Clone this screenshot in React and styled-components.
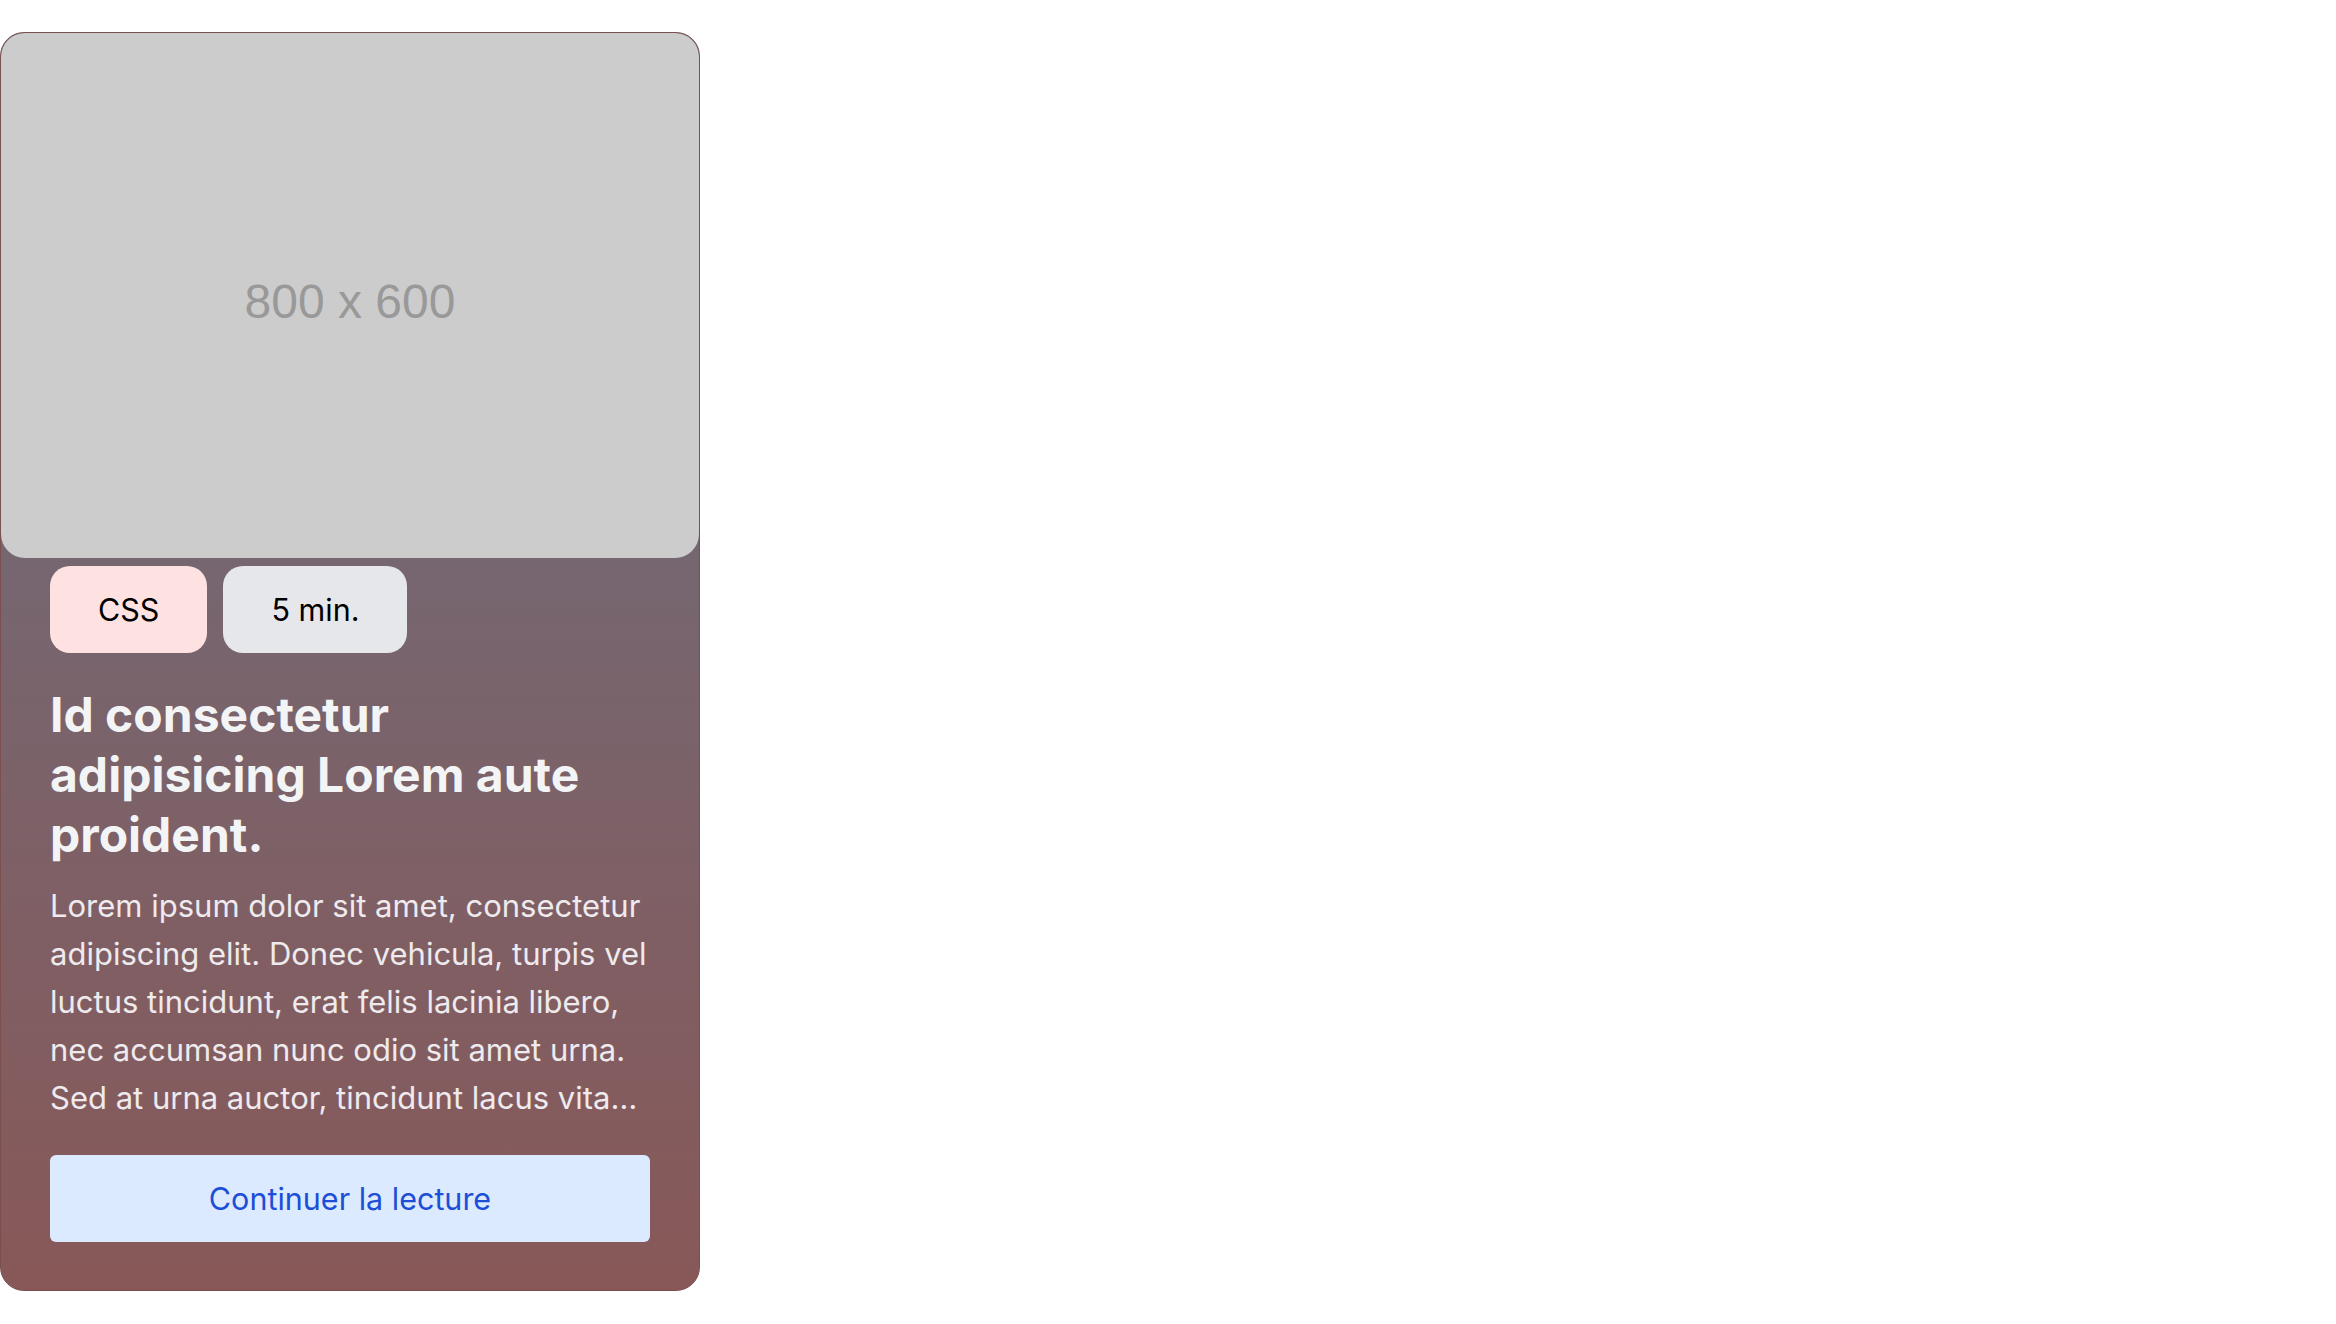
import styled, { createGlobalStyle } from "styled-components";

const GlobalStyle = createGlobalStyle`
  * {
    box-sizing: border-box;
  }
  body {
    margin: 0;
    background: #ffffff;
    font-family: Inter, "Noto Sans", sans-serif;
  }
`;

const Page = styled.div`
  padding-top: 32px;
`;

const Card = styled.article`
  width: 700px;
  border: 1px solid #7c4f4f;
  border-radius: 24px;
  overflow: hidden;
  background: linear-gradient(to bottom, #6a6f80 0%, #766670 42%, #885858 100%);
  display: flex;
  flex-direction: column;
`;

const Thumb = styled.div`
  width: 100%;
  height: 525px;
  padding-top: 12px;
  background: #cccccc;
  border-radius: 24px;
  display: flex;
  align-items: center;
  justify-content: center;
  font-family: "Liberation Sans", Arial, sans-serif;
  font-size: 48px;
  color: #999999;
`;

const Body = styled.div`
  display: flex;
  flex-direction: column;
  padding: 8px 49px 48px;
`;

const Tags = styled.div`
  display: flex;
  gap: 16px;
`;

const Tag = styled.span`
  height: 87px;
  padding: 0 48px;
  display: flex;
  align-items: center;
  border-radius: 20px;
  font-size: 30.5px;
  color: #000000;
  background: ${(p) => p.$bg};
`;

const Title = styled.h2`
  margin: 32px 0 0;
  font-size: 48px;
  line-height: 60px;
  font-weight: 700;
  color: #f3f4f6;
`;

const Excerpt = styled.p`
  margin: 17px 0 0;
  font-size: 31px;
  line-height: 48px;
  color: #eeeaee;
  display: -webkit-box;
  -webkit-box-orient: vertical;
  -webkit-line-clamp: 5;
  overflow: hidden;
`;

const ReadButton = styled.button`
  margin-top: 33px;
  height: 87px;
  width: 100%;
  border: none;
  border-radius: 6px;
  background: #dbeafe;
  color: #1d4ed8;
  font-family: Inter, "Noto Sans", sans-serif;
  font-size: 30.5px;
  cursor: pointer;
`;

const App = () => {
  return (
    <Page>
      <GlobalStyle />
      <Card>
        <Thumb>800 x 600</Thumb>
        <Body>
          <Tags>
            <Tag $bg="#fee2e2">CSS</Tag>
            <Tag $bg="#e5e7eb">5 min.</Tag>
          </Tags>
          <Title>Id consectetur adipisicing Lorem aute proident.</Title>
          <Excerpt>
            Lorem ipsum dolor sit amet, consectetur adipiscing elit. Donec
            vehicula, turpis vel luctus tincidunt, erat felis lacinia libero,
            nec accumsan nunc odio sit amet urna. Sed at urna auctor, tincidunt
            lacus vitae, fermentum nisi. Proin eget tortor risus.
          </Excerpt>
          <ReadButton>Continuer la lecture</ReadButton>
        </Body>
      </Card>
    </Page>
  );
};

export default App;
